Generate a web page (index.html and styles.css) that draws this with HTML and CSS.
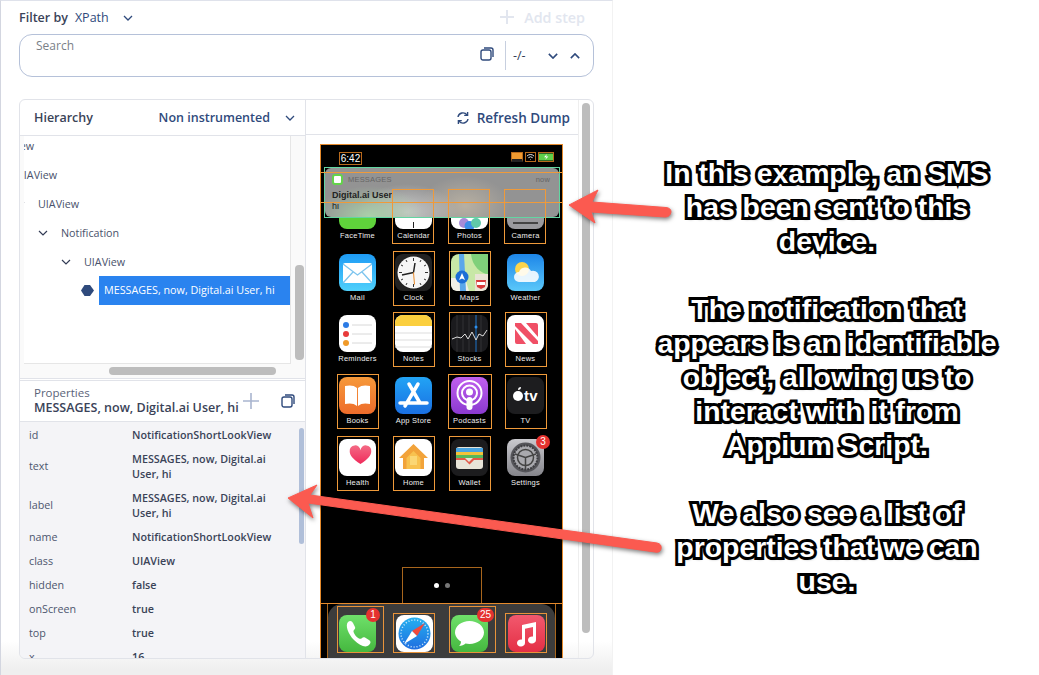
FILE: index.html
```html
<!DOCTYPE html>
<html lang="en">
<head>
<meta charset="utf-8">
<title>Inspector</title>
<link rel="stylesheet" href="styles.css">
</head>
<body>
<div class="page">
  <main class="app">
    <div class="filter-row">
      <span class="filter-label">Filter by</span>
      <span class="filter-value">XPath</span>
      <svg class="chev-sm" viewBox="0 0 10 6"><path d="M1 1l4 4 4-4"/></svg>
      <span class="add-step"><svg class="add-plus" viewBox="0 0 14 14"><path d="M7 0v14M0 7h14"/></svg>Add step</span>
    </div>
    <div class="search">
      <span class="search-ph">Search</span>
      <div class="search-tools">
        <svg class="copy" viewBox="0 0 14 14"><rect x="1" y="3" width="10" height="10" rx="2"/><path d="M4 1h7a2 2 0 0 1 2 2v7"/></svg>
        <span class="divider"></span>
        <span class="count">-/-</span>
        <svg class="chev-b" viewBox="0 0 12 7"><path d="M1 1l5 5 5-5"/></svg>
        <svg class="chev-b" viewBox="0 0 12 7"><path d="M1 6l5-5 5 5"/></svg>
      </div>
    </div>
    <section class="panel">
      <div class="left">
        <div class="hier-head">
          <span class="hier-title">Hierarchy</span>
          <span class="hier-mode">Non instrumented</span>
          <svg class="chev-sm" viewBox="0 0 10 6"><path d="M1 1l4 4 4-4"/></svg>
        </div>
        <div class="tree-zone">
          <div class="tree-main">
            <div class="tree">
              <div class="tree-clip">
                <div class="row l0"><svg class="twist" viewBox="0 0 10 6"><path d="M1 1l4 4 4-4"/></svg>UIAView</div>
                <div class="row l1"><svg class="twist" viewBox="0 0 10 6"><path d="M1 1l4 4 4-4"/></svg>UIAView</div>
                <div class="row l2"><svg class="twist" viewBox="0 0 10 6"><path d="M1 1l4 4 4-4"/></svg>UIAView</div>
                <div class="row l3"><svg class="twist" viewBox="0 0 10 6"><path d="M1 1l4 4 4-4"/></svg>Notification</div>
                <div class="row l4"><svg class="twist" viewBox="0 0 10 6"><path d="M1 1l4 4 4-4"/></svg>UIAView</div>
                <div class="row l5"><svg class="diamond" viewBox="0 0 13 11"><path d="M0 5.500L3.500 0H9l4 5.500L9 11H3.500z"/></svg><span class="selected">MESSAGES, now, Digital.ai User, hi</span></div>
              </div>
            </div>
            <div class="v-track"><span class="v-thumb"></span></div>
          </div>
          <div class="h-track"><span class="h-thumb"></span></div>
        </div>
        <div class="prop-head">
          <div class="prop-titles">
            <div class="prop-cap">Properties</div>
            <div class="prop-name">MESSAGES, now, Digital.ai User, hi</div>
          </div>
          <svg class="prop-plus" viewBox="0 0 16 16"><path d="M8 0v16M0 8h16"/></svg>
          <svg class="copy" viewBox="0 0 14 14"><rect x="1" y="3" width="10" height="10" rx="2"/><path d="M4 1h7a2 2 0 0 1 2 2v7"/></svg>
        </div>
        <div class="props">
          <div class="prop-list">
            <div class="prop"><span class="k">id</span><span class="v">NotificationShortLookView</span></div>
            <div class="prop two"><span class="k">text</span><span class="v">MESSAGES, now, Digital.ai User, hi</span></div>
            <div class="prop two"><span class="k">label</span><span class="v">MESSAGES, now, Digital.ai User, hi</span></div>
            <div class="prop"><span class="k">name</span><span class="v">NotificationShortLookView</span></div>
            <div class="prop"><span class="k">class</span><span class="v">UIAView</span></div>
            <div class="prop"><span class="k">hidden</span><span class="v">false</span></div>
            <div class="prop"><span class="k">onScreen</span><span class="v">true</span></div>
            <div class="prop"><span class="k">top</span><span class="v">true</span></div>
            <div class="prop"><span class="k">x</span><span class="v">16</span></div>
          </div>
          <span class="prop-thumb"></span>
        </div>
      </div>
      <div class="right">
        <div class="right-main">
          <div class="refresh">
            <svg class="refresh-ic" viewBox="0 0 14 14"><path d="M2 6a5 5 0 0 1 9-2M12 8a5 5 0 0 1-9 2"/><path d="M11.600 1v3.400H8.200M2.400 13V9.600h3.400"/></svg>
            <span>Refresh Dump</span>
          </div>
          <div class="phone">
            <div class="status">
              <span class="time">6:42</span>
              <span class="st-ic st-a"></span>
              <span class="st-ic st-b"><svg viewBox="0 0 10 7"><path d="M1 2.500a6 6 0 0 1 8 0M2.600 4.300a3.600 3.600 0 0 1 4.800 0M5 6.600v-.6"/></svg></span>
              <span class="st-ic st-c"><svg viewBox="0 0 14 7"><rect x="0" y="0" width="14" height="7" fill="#5ed04a"/><path d="M8 .5L5 3.800h2.400L6 6.500l3.400-3.600H7z" fill="#fff"/></svg></span>
            </div>
            <div class="apps">
              <div class="app-i"><svg class="ic" viewBox="0 0 37 37"><rect width="37" height="37" rx="8" fill="#5fd33b"/></svg><span>FaceTime</span></div>
              <div class="app-i"><svg class="ic" viewBox="0 0 37 37"><rect width="37" height="37" rx="8" fill="#fff"/><path d="M18 30h1v6h-1z" fill="#222"/></svg><span>Calendar</span></div>
              <div class="app-i"><svg class="ic" viewBox="0 0 37 37"><rect width="37" height="37" rx="8" fill="#fff"/><circle cx="13" cy="31" r="5" fill="#a78bd8"/><circle cx="18.500" cy="34" r="5" fill="#3d8ee8"/><circle cx="25" cy="31" r="5" fill="#60c9a8"/></svg><span>Photos</span></div>
              <div class="app-i"><svg class="ic" viewBox="0 0 37 37"><rect width="37" height="37" rx="8" fill="#9a9a9e"/><rect x="6" y="30" width="25" height="2" fill="#444"/></svg><span>Camera</span></div>

              <div class="app-i"><svg class="ic" viewBox="0 0 37 37"><defs><linearGradient id="gm" x1="0" y1="0" x2="0" y2="1"><stop offset="0" stop-color="#1e9bf5"/><stop offset="1" stop-color="#4fd0fb"/></linearGradient></defs><rect width="37" height="37" rx="8" fill="url(#gm)"/><rect x="4" y="9" width="29" height="20" rx="2" fill="#fff"/><path d="M4 10l14.500 11L33 10M4 29l10-11M33 29L23 18" fill="none" stroke="#7cc4ee" stroke-width="1.300"/></svg><span>Mail</span></div>
              <div class="app-i hl"><svg class="ic" viewBox="0 0 37 37"><rect width="37" height="37" rx="8" fill="#222"/><circle cx="18.500" cy="18.500" r="16" fill="#f6f6f6"/><path d="M18.500 18.500L7 21M18.500 18.500L20 9" stroke="#222" stroke-width="1.500"/><path d="M18.500 18.500l1 12" stroke="#e88a2a" stroke-width="1"/><path d="M18.500 4v3M18.500 30v3M4 18.500h3M30 18.500h3M11 6l1 2M26 6l-1 2M6 11l2 1M31 11l-2 1M6 26l2-1M31 26l-2-1M11 31l1-2M26 31l-1-2" stroke="#333" stroke-width="1"/></svg><span>Clock</span></div>
              <div class="app-i hl"><svg class="ic" viewBox="0 0 37 37"><rect width="37" height="37" rx="8" fill="#c8e8a6"/><path d="M20 0h17v20C30 20 21 12 20 0z" fill="#7fd07a"/><path d="M0 24h14l4 13H6a6 6 0 0 1-6-6z" fill="#f1efe6"/><path d="M8 0h5l2 37H9z" fill="#5aa7ea"/><path d="M24 20h13v11a6 6 0 0 1-6 6h-7z" fill="#e9e4d6"/><circle cx="11" cy="23" r="6.500" fill="#1d6fd6"/><path d="M11 19l3 7-3-1.500L8 26z" fill="#fff"/><path d="M25 26h10l-1 7-4 2-4-2z" fill="#d83a3a"/><rect x="26" y="28" width="8" height="3" fill="#fff"/></svg><span>Maps</span></div>
              <div class="app-i"><svg class="ic" viewBox="0 0 37 37"><defs><linearGradient id="gw" x1="0" y1="0" x2="0" y2="1"><stop offset="0" stop-color="#1d86e8"/><stop offset="1" stop-color="#5bc8fa"/></linearGradient></defs><rect width="37" height="37" rx="8" fill="url(#gw)"/><circle cx="15" cy="15" r="7" fill="#fbd44c"/><path d="M12 28a5 5 0 0 1 0-10 6.500 6.500 0 0 1 12-1 5.500 5.500 0 0 1 4 11z" fill="#fff" fill-opacity=".88"/></svg><span>Weather</span></div>

              <div class="app-i"><svg class="ic" viewBox="0 0 37 37"><rect width="37" height="37" rx="8" fill="#fff"/><circle cx="7" cy="10" r="3" fill="#2c7be5"/><circle cx="7" cy="19" r="3" fill="#e83b3b"/><circle cx="7" cy="28" r="3" fill="#f09a2a"/><path d="M13 10h20M13 19h20M13 28h20" stroke="#d8d8d8"/></svg><span>Reminders</span></div>
              <div class="app-i hl"><svg class="ic" viewBox="0 0 37 37"><rect width="37" height="37" rx="8" fill="#fff"/><path d="M0 8a8 8 0 0 1 8-8h21a8 8 0 0 1 8 8v3H0z" fill="#fbcf3e"/><path d="M0 18h37M0 25h37M0 32h37" stroke="#ddd"/></svg><span>Notes</span></div>
              <div class="app-i hl"><svg class="ic" viewBox="0 0 37 37"><rect width="37" height="37" rx="8" fill="#1b1b1e"/><path d="M6 0v37M12 0v37M18 0v37M30 0v37" stroke="#444" stroke-width=".6"/><path d="M25 0v37" stroke="#1f74c8"/><path d="M1 24l5-2 4 1 4-4 3 5 4-7 4 8 3-6 4 2 4-6" fill="none" stroke="#ddd" stroke-width="1"/><circle cx="25" cy="12" r="1.500" fill="#2c90f0"/></svg><span>Stocks</span></div>
              <div class="app-i hl"><svg class="ic" viewBox="0 0 37 37"><rect width="37" height="37" rx="8" fill="#fff"/><path d="M8 8h6l17 18v3h-5L8 11z" fill="#f04f66"/><path d="M8 14l11 15H10a2 2 0 0 1-2-2zM19 8h10a2 2 0 0 1 2 2v12z" fill="#f04f66"/></svg><span>News</span></div>

              <div class="app-i hl"><svg class="ic" viewBox="0 0 37 37"><defs><linearGradient id="gb" x1="0" y1="0" x2="0" y2="1"><stop offset="0" stop-color="#f6993a"/><stop offset="1" stop-color="#ee6c2b"/></linearGradient></defs><rect width="37" height="37" rx="8" fill="url(#gb)"/><path d="M18 11c-3-3-8-3-12-2v18c4-1 9-1 12 2zM19 11c3-3 8-3 12-2v18c-4-1-9-1-12 2z" fill="#fff"/></svg><span>Books</span></div>
              <div class="app-i"><svg class="ic" viewBox="0 0 37 37"><defs><linearGradient id="ga" x1="0" y1="0" x2="0" y2="1"><stop offset="0" stop-color="#22a4f5"/><stop offset="1" stop-color="#1a6fe2"/></linearGradient></defs><rect width="37" height="37" rx="8" fill="url(#ga)"/><path d="M14 7l11 19M23 7L10 29M5 26h27" stroke="#fff" stroke-width="3.500" stroke-linecap="round"/></svg><span>App Store</span></div>
              <div class="app-i hl wide"><svg class="ic" viewBox="0 0 37 37"><defs><linearGradient id="gp" x1="0" y1="0" x2="0" y2="1"><stop offset="0" stop-color="#c160ef"/><stop offset="1" stop-color="#8a3ad0"/></linearGradient></defs><rect width="37" height="37" rx="8" fill="url(#gp)"/><circle cx="18.500" cy="16" r="12" fill="none" stroke="#fff" stroke-width="2"/><circle cx="18.500" cy="16" r="7.500" fill="none" stroke="#fff" stroke-width="2"/><circle cx="18.500" cy="15" r="3.500" fill="#fff"/><rect x="15.500" y="20" width="6" height="13" rx="3" fill="#fff"/></svg><span>Podcasts</span></div>
              <div class="app-i hl"><svg class="ic" viewBox="0 0 37 37"><rect width="37" height="37" rx="8" fill="#1d1d1f"/><circle cx="11" cy="19" r="5" fill="#fff"/><path d="M11 13c0-2 1-3 3-3 0 2-1 3-3 3z" fill="#fff"/><text x="17" y="24" class="tv-t">tv</text></svg><span>TV</span></div>

              <div class="app-i hl"><svg class="ic" viewBox="0 0 37 37"><defs><linearGradient id="gh" x1="0" y1="0" x2="0" y2="1"><stop offset="0" stop-color="#f46a85"/><stop offset="1" stop-color="#ef2b5b"/></linearGradient></defs><rect width="37" height="37" rx="8" fill="#fff"/><path d="M26 25c-8-5-11-9-11-13a5.500 5.500 0 0 1 11-1 5.500 5.500 0 0 1 11 1c0 4-3 8-11 13z" fill="url(#gh)" transform="translate(-4 .5) scale(.98)"/></svg><span>Health</span></div>
              <div class="app-i hl"><svg class="ic" viewBox="0 0 37 37"><rect width="37" height="37" rx="8" fill="#fff"/><path d="M18.500 5L33 19h-4v11H8V19H4z" fill="#f2a33a"/><path d="M18.500 12l7 7v11h-14V19z" fill="#f8c24f"/><rect x="15" y="17" width="7" height="9" fill="#fbd774"/></svg><span>Home</span></div>
              <div class="app-i hl"><svg class="ic" viewBox="0 0 37 37"><rect width="37" height="37" rx="8" fill="#1c1c1e"/><rect x="5" y="8" width="27" height="22" rx="3" fill="#e8e4d8"/><rect x="5" y="9" width="27" height="4" fill="#4aa4e0"/><rect x="5" y="13" width="27" height="3" fill="#f4c23a"/><rect x="5" y="16" width="27" height="3" fill="#58b85a"/><path d="M5 19h9l4 4 4-4h10v2H23l-4.500 4.500L14 21H5z" fill="#e25a4a"/></svg><span>Wallet</span></div>
              <div class="app-i"><span class="ic-wrap"><svg class="ic" viewBox="0 0 37 37"><defs><linearGradient id="gs" x1="0" y1="0" x2="0" y2="1"><stop offset="0" stop-color="#c9c9ce"/><stop offset="1" stop-color="#85858b"/></linearGradient></defs><rect width="37" height="37" rx="8" fill="url(#gs)"/><circle cx="18.500" cy="18.500" r="15" fill="#55555a"/><circle cx="18.500" cy="18.500" r="12" fill="#a9a9ae" stroke="#3c3c40" stroke-width="2" stroke-dasharray="2 1"/><circle cx="18.500" cy="18.500" r="8" fill="none" stroke="#444" stroke-width="1.500"/><path d="M18.500 18.500L8 15M18.500 18.500L29 15M18.500 18.500V30" stroke="#444" stroke-width="1.500"/></svg><span class="badge b3">3</span></span><span>Settings</span></div>
            </div>
            <div class="dots-box"><i class="dot"></i><i class="dot dim"></i></div>
            <div class="dock-line">
              <div class="dock-rails">
                <div class="dock">
                  <div class="dk hl dk-w"><span class="ic-wrap"><svg class="ic" viewBox="0 0 37 37"><defs><linearGradient id="gph" x1="0" y1="0" x2="0" y2="1"><stop offset="0" stop-color="#6fe06a"/><stop offset="1" stop-color="#45b83f"/></linearGradient></defs><rect width="37" height="37" rx="8" fill="url(#gph)"/><path d="M9 7c2-2 4-1 5 1l2 4c.5 1 0 2-1 3-1 1-.5 2 .5 4s3 3.500 4.500 4.500c1 .5 2 .5 3-.5 1-1 2-1 3-.5l4 2.500c2 1 2 3 0 5-3 3-9 1-15-5S6 10 9 7z" fill="#fff"/></svg><span class="badge b1">1</span></span></div>
                  <div class="dk hl"><svg class="ic" viewBox="0 0 37 37"><defs><linearGradient id="gsa" x1="0" y1="0" x2="0" y2="1"><stop offset="0" stop-color="#25b0f0"/><stop offset="1" stop-color="#1f6ee0"/></linearGradient></defs><rect width="37" height="37" rx="8" fill="#fff"/><circle cx="18.500" cy="18.500" r="16" fill="url(#gsa)"/><circle cx="18.500" cy="18.500" r="13.500" fill="none" stroke="#d6eefc" stroke-width="1.500" stroke-dasharray="1 2"/><path d="M29 8L16 16l5 5z" fill="#f04a3e"/><path d="M8 29l13-8-5-5z" fill="#fff"/></svg></div>
                  <div class="dk hl dk-w"><span class="ic-wrap"><svg class="ic" viewBox="0 0 37 37"><defs><linearGradient id="gme" x1="0" y1="0" x2="0" y2="1"><stop offset="0" stop-color="#6fe06a"/><stop offset="1" stop-color="#45b83f"/></linearGradient></defs><rect width="37" height="37" rx="8" fill="url(#gme)"/><path d="M18.500 6c8 0 14.500 5 14.500 11.500S26.500 29 18.500 29c-1.500 0-3-.2-4-.5-1.500 1.500-4 2.500-6.500 2.500 1-1 2-2.500 2-4.500C6.500 24.500 4 21 4 17.500 4 11 10.500 6 18.500 6z" fill="#fff"/></svg><span class="badge b25">25</span></span></div>
                  <div class="dk hl"><svg class="ic" viewBox="0 0 37 37"><defs><linearGradient id="gmu" x1="0" y1="0" x2="0" y2="1"><stop offset="0" stop-color="#f2596e"/><stop offset="1" stop-color="#e42f45"/></linearGradient></defs><rect width="37" height="37" rx="8" fill="url(#gmu)"/><path d="M14 10l14-3v18a4 3.500 0 1 1-3-3.400V12l-8 1.800V28a4 3.500 0 1 1-3-3.400z" fill="#fff"/></svg></div>
                </div>
              </div>
            </div>
            <span class="line line-a"></span>
            <span class="line line-b"></span>
            <div class="notif-frame">
              <div class="notif">
                <div class="notif-top"><i class="notif-app"></i><span class="notif-cap">MESSAGES</span><span class="notif-now">now</span></div>
                <div class="notif-title">Digital.ai User</div>
                <div class="notif-body">hi</div>
              </div>
            </div>
            <span class="box box-a"></span>
            <span class="box box-b"></span>
            <span class="box box-c"></span>
          </div>
        </div>
        <div class="right-scroll"><span class="right-thumb"></span></div>
      </div>
    </section>
  </main>
  <aside class="notes">
    <p>In this example, an SMS<br>has been sent to this<br>device.</p>
    <p>The notification that<br>appears is an identifiable<br>object, allowing us to<br>interact with it from<br>Appium Script.</p>
    <p>We also see a list of<br>properties that we can<br>use.</p>
  </aside>
  <svg class="arrows" viewBox="0 0 1039 675">
    <path class="arrow" d="M569 205L598 190 592 202 666 207.500Q671 208 671 212 670 217 665 217L591 212 595 223z"/>
    <path class="arrow" d="M288 498L317 485 310 495 657 543Q662 544 661 549 660 553 655 552L308 503 313 518z"/>
  </svg>
</div>
</body>
</html>
```
FILE: styles.css
```css
* { box-sizing: border-box; }
html, body { margin: 0; height: 100%; overflow: hidden; background: #fff; }
body { font-family: "Open Sans", "Liberation Sans", sans-serif; color: #333c55; }
.page { position: relative; display: flex; width: 1039px; height: 675px; }

.app {
  width: 613px; height: 675px; flex: none; padding: 0 18px 0 18px;
  border-top: 1px solid #dfe2eb; border-left: 1px solid #d3d6e0; border-right: 1px solid #f2f2f2;
  background: linear-gradient(#fff 0, #fff 640px, #efefef 668px);
}

.filter-row { height: 33px; display: flex; align-items: center; font-size: 12.500px; font-weight: 600; padding-bottom: 1px; }
.filter-label { color: #3a4358; }
.filter-value { color: #2f4a7c; margin-left: 7px; font-weight: 500; }
.chev-sm { width: 10px; height: 6px; fill: none; stroke: #2f4a7c; stroke-width: 1.300; flex: none; }
.filter-row .chev-sm { margin-left: 14px; margin-top: 2px; }
.add-step { margin-left: auto; margin-right: 9px; display: flex; align-items: center; color: #e2e6ef; font-size: 14.300px; }
.add-plus { width: 14px; height: 14px; margin-right: 10px; fill: none; stroke: #e2e6ef; stroke-width: 2; }

.search { height: 43px; border: 1px solid #b5c1d9; border-radius: 13px; display: flex; justify-content: space-between; padding: 4px 13px 0 16px; }
.search-ph { font-size: 12px; color: #7b7f88; line-height: 14px; }
.search-tools { display: flex; align-items: flex-start; }
.copy { width: 14px; height: 14px; fill: none; stroke: #2f4a7c; stroke-width: 1.400; flex: none; }
.search-tools .copy { margin-top: 8px; }
.divider { width: 1px; height: 29px; background: #c7cfdf; margin: 2px 7px 0 11px; }
.count { font-size: 12.500px; color: #333c55; margin-top: 8px; width: 35px; }
.chev-b { width: 10px; height: 6px; fill: none; stroke: #2f4a7c; stroke-width: 1.900; margin-top: 14px; margin-right: 12px; }
.search-tools .chev-b:last-child { margin-right: 0; }

.panel {
  margin-top: 22px; height: 560px; display: flex; overflow: hidden;
  border: 1px solid #e1e3e9; border-radius: 6px;
}
.left { width: 286px; flex: none; border-right: 1px solid #e1e3e9; display: flex; flex-direction: column; }
.hier-head { height: 36px; flex: none; display: flex; align-items: center; padding: 0 10px 0 14px; border-bottom: 1px solid #e1e3e9; font-size: 12.500px; font-weight: 600; }
.hier-title { color: #3a4358; }
.hier-mode { color: #2f4a7c; margin-left: auto; margin-right: 15px; }
.tree-zone { height: 243px; flex: none; border-bottom: 1px solid #e1e3e9; padding-left: 4px; display: flex; flex-direction: column; background: #fafafa; }
.tree-main { height: 228px; display: flex; flex: none; }
.tree { width: 267px; flex: none; background: #fff; border-right: 1px solid #e6e6e6; border-bottom: 1px solid #e6e6e6; overflow: hidden; }
.tree-clip { margin: -5px 0 0 -64px; }
.row { height: 29px; display: flex; align-items: center; font-size: 10.750px; color: #49526b; white-space: nowrap; }
.twist { width: 10px; height: 6px; margin-right: 13px; fill: none; stroke: #333c55; stroke-width: 1.200; flex: none; }
.l0 { padding-left: 10px; } .l1 { padding-left: 33px; } .l2 { padding-left: 55px; } .l3 { padding-left: 78px; } .l4 { padding-left: 101px; }
.l5 { padding-left: 121px; }
.diamond { width: 13px; height: 11px; fill: #2f4a7c; margin-right: 5px; flex: none; }
.selected { width: 191px; height: 29px; line-height: 29px; padding-left: 5px; background: #2a83ef; color: #fff; flex: none; }
.v-track { flex: 1; padding: 129px 1px 0 4px; }
.v-thumb { display: block; height: 95px; border-radius: 4px; background: #bdbdbd; }
.h-track { height: 14px; padding: 3px 0 0 85px; }
.h-thumb { display: block; width: 167px; height: 8px; border-radius: 4px; background: #bdbdbd; }
.prop-head { height: 42px; flex: none; display: flex; align-items: center; padding: 0 10px 0 14px; border-top: 1px solid #e1e3e9; border-bottom: 1px solid #e1e3e9; margin-top: 1px; }
.prop-titles { flex: 1; min-width: 0; }
.prop-cap { font-size: 11.500px; line-height: 14px; color: #5a6378; }
.prop-name { font-size: 12.500px; line-height: 16px; font-weight: 600; color: #3a4358; white-space: nowrap; }
.prop-plus { width: 16px; height: 16px; fill: none; stroke: #a9b5cf; stroke-width: 1.600; margin-right: 22px; flex: none; }
.props { flex: 1; min-height: 0; overflow: hidden; background: #f4f4f7; display: flex; }
.prop-list { width: 278px; flex: none; padding-top: 1px; }
.prop { display: flex; align-items: center; height: 24px; padding-left: 9px; font-size: 10.750px; line-height: 15px; color: #4d566e; }
.prop.two { height: 39px; }
.k { width: 103px; flex: none; }
.v { width: 145px; flex: none; color: #3a4358; font-weight: 600; }
.prop-thumb { display: block; width: 5px; height: 116px; margin: 6px 0 0 1px; border-radius: 3px; background: #b0bfd9; }

.right { flex: 1; display: flex; min-width: 0; overflow: hidden; }
.right-main { width: 272px; flex: none; height: 100%; overflow: hidden; }
.refresh { height: 35px; display: flex; align-items: center; justify-content: flex-end; padding: 2px 8px 0 0; border-bottom: 1px solid #e1e3e9; font-size: 13.500px; font-weight: 600; color: #2f4a7c; }
.refresh-ic { width: 14px; height: 14px; margin-right: 7px; fill: none; stroke: #2f4a7c; stroke-width: 1.400; }
.right-scroll { flex: 1; border-left: 1px solid #eee; padding: 3px 0 0 3px; }
.right-thumb { display: block; width: 8px; height: 530px; border-radius: 4px; background: #bdbdbd; }

.phone { position: relative; width: 243px; height: 520px; margin: 9px 0 0 14px; background: #000; border: 1px solid #e58a2c; overflow: hidden; }
.status { height: 22px; display: flex; align-items: flex-start; padding: 7px 8px 0 18px; }
.time { width: 23px; height: 13px; border: 1px solid #b86a1c; color: #fff; font: 10px/11px "Liberation Sans", sans-serif; text-align: center; margin-right: auto; }
.st-ic { height: 10px; border: 1px solid #b86a1c; margin-left: 2px; display: block; }
.st-ic svg { display: block; width: 100%; height: 100%; fill: none; stroke: #fff; stroke-width: 1; }
.st-a { width: 12px; background: #f09a30; border-bottom: 3px solid #222; margin-left: 0; }
.st-b { width: 11px; }
.st-c { width: 16px; margin-right: 0; }
.st-c svg { stroke: none; }

.apps { display: grid; grid-template-columns: repeat(4, 56px); grid-auto-rows: 61.670px; justify-items: center; padding: 22px 0 0 8.500px; }
.app-i { width: 42px; height: 55px; padding-top: 2px; border: 1px solid transparent; display: flex; flex-direction: column; align-items: center; color: #eee; font: 7.500px/9px "Liberation Sans", sans-serif; letter-spacing: .25px; white-space: nowrap; }
.app-i.hl { border-color: #ef9a3a; }
.app-i.wide { width: 44px; }
.ic { width: 37px; height: 37px; display: block; flex: none; }
.tv-t { font: 700 15px "Liberation Sans", sans-serif; fill: #fff; }
.app-i > span:last-child { margin-top: 2px; }
.ic-wrap { position: relative; display: block; width: 37px; height: 37px; flex: none; }
.badge { position: absolute; height: 14px; border-radius: 7px; background: #e5322f; color: #fff; font: 10px/14px "Liberation Sans", sans-serif; text-align: center; letter-spacing: 0; }
.b3 { width: 14px; top: -4px; right: -6px; }
.b1 { width: 14px; top: -7px; right: -4px; }
.b25 { width: 17px; top: -7px; right: -6px; }

.dots-box { width: 80px; height: 36px; margin: 70px auto 0; border: 1px solid #a8661d; border-bottom: 0; display: flex; align-items: center; justify-content: center; gap: 6px; }
.dot { width: 5px; height: 5px; border-radius: 50%; background: #fff; }
.dot.dim { background: #777; }
.dock-line { border-top: 1px solid #e58a2c; padding: 0 6px; }
.dock-rails { border-left: 1px solid #a8661d; border-right: 1px solid #a8661d; }
.dock { height: 60px; background: #3c3c3c; border-radius: 14px 14px 0 0; padding: 2px 0 0 9px; display: flex; align-items: flex-start; }
.dk { width: 42px; height: 47px; margin-right: 9px; padding: 8px 0 0 1px; border: 1px solid transparent; display: flex; flex: none; align-self: flex-start; }
.dk.hl { border-color: #e8933a; }
.dk.hl:nth-child(2), .dk.hl:nth-child(4) { height: 40px; margin-top: 7px; padding-top: 1px; padding-left: 2px; }
.dk:nth-child(2) { margin-right: 14px; }
.dk.dk-w { width: 47px; }

.line { position: absolute; left: 0; right: 0; height: 1px; background: #ef9a3a; z-index: 3; }
.line-a { top: 27px; }
.line-b { top: 57px; }
.notif-frame { position: absolute; left: 3px; top: 22px; width: 236px; height: 51px; border: 1px solid #62d6a2; background: #000; z-index: 2; }
.notif {
  height: 100%; border-radius: 6px; padding: 5px 7px; color: #222; font-family: "Liberation Sans", sans-serif;
  background:
    radial-gradient(ellipse 55px 30px at 45px 48px, #a9cfa9 0, rgba(169,207,169,0) 100%),
    radial-gradient(ellipse 50px 28px at 82px 44px, #c8c8c8 0, rgba(200,200,200,0) 100%),
    radial-gradient(ellipse 45px 30px at 140px 38px, #b8b0a2 0, rgba(184,176,162,0) 100%),
    #939393;
}
.notif-top { display: flex; align-items: center; height: 12px; font-size: 7.500px; letter-spacing: .2px; color: #666; }
.notif-app { width: 11px; height: 11px; border-radius: 3px; background: #fff; margin-right: 5px; border: 2.500px solid #63d44a; }
.notif-now { margin-left: auto; margin-right: 2px; }
.notif-title { margin-top: 5px; font-size: 9px; line-height: 11px; font-weight: 700; }
.notif-body { font-size: 9px; line-height: 11px; }
.box { position: absolute; top: 44px; width: 42px; height: 55px; border: 1px solid #ef9a3a; z-index: 3; }
.box-a { left: 71px; }
.box-b { left: 127px; }
.box-c { left: 183px; }

.notes { flex: 1; padding: 156px 0 0 2px; text-align: center; font: 700 28.400px/34px "Liberation Sans", sans-serif; color: #fff; }
.notes p { margin: 0 0 34px; -webkit-text-stroke: 6px #000; paint-order: stroke fill; text-shadow: 1px 2px 3px rgba(0,0,0,.55); }

.arrows { position: absolute; left: 0; top: 0; width: 1039px; height: 675px; pointer-events: none; }
.arrow { fill: #fb5a50; stroke: #fb5a50; stroke-width: 1; stroke-linejoin: round; filter: drop-shadow(1px 2px 2px rgba(0,0,0,.5)); }
```
